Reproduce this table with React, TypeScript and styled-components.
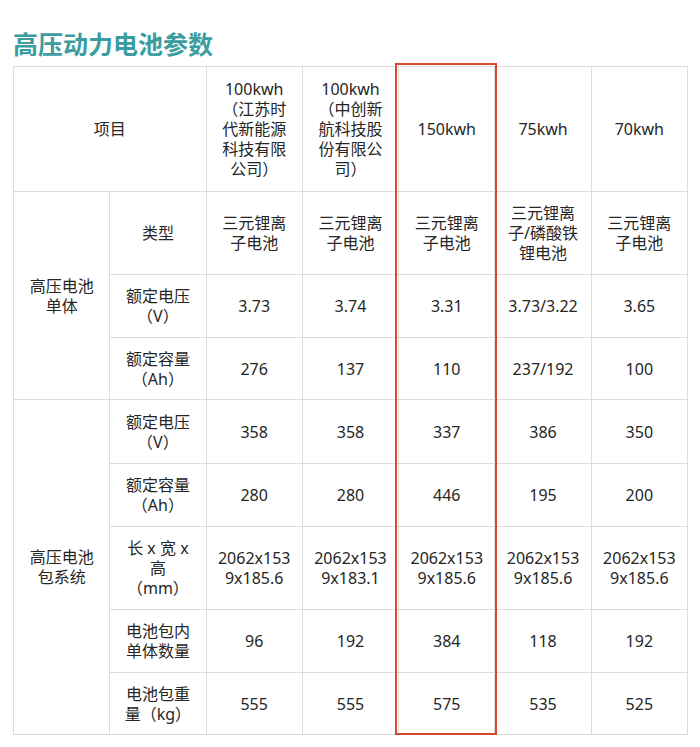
import React from 'react';
import styled, { createGlobalStyle } from 'styled-components';

const GlobalStyle = createGlobalStyle`
  body {
    margin: 0;
    background: #ffffff;
    font-family: "Noto Sans", "Noto Sans CJK SC", sans-serif;
    color: #262626;
  }
`

interface Row {
  label: string[],
  values: string[][]
}

interface Group {
  title: string[],
  rows: Row[]
}

const headers: string[][] = [
  ['100kwh', '（江苏时', '代新能源', '科技有限', '公司）'],
  ['100kwh', '（中创新', '航科技股', '份有限公', '司）'],
  ['150kwh'],
  ['75kwh'],
  ['70kwh'],
]

const rowHeights = [83, 63, 62, 64, 63, 83, 63, 62]

const groups: Group[] = [
  {
    title: ['高压电池', '单体'],
    rows: [
      {
        label: ['类型'],
        values: [
          ['三元锂离', '子电池'],
          ['三元锂离', '子电池'],
          ['三元锂离', '子电池'],
          ['三元锂离', '子/磷酸铁', '锂电池'],
          ['三元锂离', '子电池'],
        ]
      },
      { label: ['额定电压', '（V）'], values: [['3.73'], ['3.74'], ['3.31'], ['3.73/3.22'], ['3.65']] },
      { label: ['额定容量', '（Ah）'], values: [['276'], ['137'], ['110'], ['237/192'], ['100']] },
    ]
  },
  {
    title: ['高压电池', '包系统'],
    rows: [
      { label: ['额定电压', '（V）'], values: [['358'], ['358'], ['337'], ['386'], ['350']] },
      { label: ['额定容量', '（Ah）'], values: [['280'], ['280'], ['446'], ['195'], ['200']] },
      {
        label: ['长 x 宽 x', '高', '（mm）'],
        values: [
          ['2062x153', '9x185.6'],
          ['2062x153', '9x183.1'],
          ['2062x153', '9x185.6'],
          ['2062x153', '9x185.6'],
          ['2062x153', '9x185.6'],
        ]
      },
      { label: ['电池包内', '单体数量'], values: [['96'], ['192'], ['384'], ['118'], ['192']] },
      { label: ['电池包重', '量（kg）'], values: [['555'], ['555'], ['575'], ['535'], ['525']] },
    ]
  }
]

const Lines: React.FC<{ lines: string[] }> = ({ lines }) => (
  <>
    {lines.map((line, i) => (
      <React.Fragment key={i}>
        {i > 0 && <br />}
        {line}
      </React.Fragment>
    ))}
  </>
)

export default function App() {
  let rowIndex = 0

  return (
    <Page>
      <GlobalStyle />
      <Title>高压动力电池参数</Title>
      <TableWrap>
        <ParamTable>
          <colgroup>
            {Array.from({ length: 7 }).map((_, i) => <col key={i} />)}
          </colgroup>
          <thead>
            <tr>
              <Cell as="th" colSpan={2} style={{ height: 124 }}>项目</Cell>
              {headers.map((h, i) => (
                <Cell as="th" key={i}><Lines lines={h} /></Cell>
              ))}
            </tr>
          </thead>
          <tbody>
            {groups.map((group, gi) =>
              group.rows.map((row, ri) => {
                const height = rowHeights[rowIndex++]
                return (
                  <tr key={`${gi}-${ri}`} style={{ height }}>
                    {ri === 0 && (
                      <Cell rowSpan={group.rows.length}><Lines lines={group.title} /></Cell>
                    )}
                    <Cell><Lines lines={row.label} /></Cell>
                    {row.values.map((v, vi) => (
                      <Cell key={vi}><Lines lines={v} /></Cell>
                    ))}
                  </tr>
                )
              })
            )}
          </tbody>
        </ParamTable>
        <Highlight />
      </TableWrap>
    </Page>
  )
}

const Page = styled.div`
  padding: 28px 13px 0;
`

const Title = styled.h2`
  margin: 0 0 8px;
  font-family: "Noto Sans CJK SC", sans-serif;
  font-size: 25px;
  line-height: 30px;
  font-weight: 700;
  color: #3b9da0;
`

const TableWrap = styled.div`
  position: relative;
  width: 675px;
`

const ParamTable = styled.table`
  width: 675px;
  table-layout: fixed;
  border-collapse: collapse;
`

const Cell = styled.td`
  border: 1px solid #dcdcdc;
  padding: 0 8px;
  text-align: center;
  vertical-align: middle;
  font-size: 16px;
  line-height: 20px;
  font-weight: 400;
  color: #262626;
`

const Highlight = styled.div`
  position: absolute;
  left: 382px;
  top: -3px;
  width: 102px;
  height: 672px;
  box-sizing: border-box;
  border: 2px solid #d8472b;
  pointer-events: none;
`
